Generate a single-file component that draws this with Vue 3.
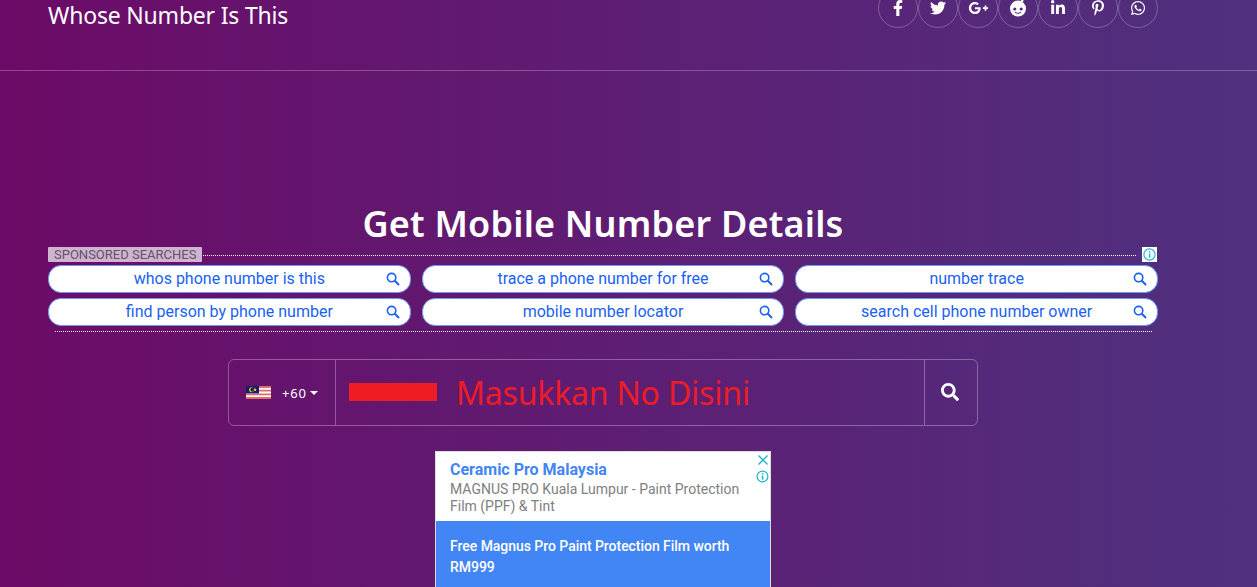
<template>
  <div class="page">
    <header class="topbar">
      <div class="topbar-inner">
        <a class="brand">Whose Number Is This</a>
        <div class="socials">
          <a v-for="s in socials" :key="s.name" class="social">
            <svg v-if="s.name !== 'reddit'" :viewBox="s.box" :width="s.w" height="16" fill="#fff"><path :d="s.d" /></svg>
            <svg v-else viewBox="0 0 18 18" width="18" height="18">
              <circle cx="9" cy="9.6" r="8" fill="#fff" />
              <circle cx="13.2" cy="1.8" r="1.3" fill="#fff" />
              <circle cx="5.8" cy="10" r="1.6" fill="#552a7c" />
              <circle cx="12.2" cy="10" r="1.6" fill="#552a7c" />
              <path d="M5.8 13.4 Q9 15.4 12.2 13.4" fill="none" stroke="#552a7c" stroke-width="1" />
            </svg>
          </a>
        </div>
      </div>
    </header>

    <main class="content">
      <h1 class="title">Get Mobile Number Details</h1>

      <section class="ads">
        <div class="ads-head">
          <span class="ads-label">SPONSORED SEARCHES</span>
          <span class="ads-rule"></span>
          <span class="ads-info">
            <svg viewBox="0 0 15 15" width="15" height="15">
              <circle cx="7.5" cy="7.5" r="5.6" fill="none" stroke="#2cb5d4" stroke-width="1.2" />
              <rect x="6.8" y="6.4" width="1.5" height="4.4" fill="#2cb5d4" />
              <rect x="6.8" y="4" width="1.5" height="1.5" fill="#2cb5d4" />
            </svg>
          </span>
        </div>
        <div class="pills">
          <a v-for="p in pills" :key="p" class="pill">
            <span class="pill-text">{{ p }}</span>
            <svg class="pill-icon" viewBox="0 0 14 14" width="14" height="14" fill="none" stroke="#1a62f0">
              <circle cx="5.6" cy="5.6" r="4.2" stroke-width="1.6" />
              <path d="M8.8 8.8 L13 13" stroke-width="2" />
            </svg>
          </a>
        </div>
        <div class="ads-foot"></div>
      </section>

      <div class="search">
        <div class="dial">
          <svg viewBox="0 0 25 13" width="25" height="13">
            <rect width="25" height="13" fill="#fff" />
            <path d="M0 0h25v1.9H0zM0 3.7h25v1.9H0zM0 7.4h25v1.9H0zM0 11.1h25V13H0z" fill="#e26a6a" />
            <rect width="13" height="7.4" fill="#14206e" />
            <circle cx="5.6" cy="3.7" r="2.5" fill="#f5c518" />
            <circle cx="6.5" cy="3.7" r="2.1" fill="#14206e" />
            <circle cx="9" cy="3.7" r="1.3" fill="#f5c518" />
          </svg>
          <span class="dial-code">+60</span>
          <span class="caret"></span>
        </div>
        <div class="field">
          <span class="redact"></span>
          <span class="hint">Masukkan No Disini</span>
        </div>
        <button class="go">
          <svg viewBox="0 0 512 512" width="18" height="18" fill="#fff"><path :d="searchPath" /></svg>
        </button>
      </div>

      <div class="ad-card">
        <div class="ad-top">
          <div class="ad-name">Ceramic Pro Malaysia</div>
          <div class="ad-desc">MAGNUS PRO Kuala Lumpur - Paint Protection Film (PPF) &amp; Tint</div>
          <div class="ad-marks">
            <svg viewBox="0 0 12 12" width="12" height="12" fill="none" stroke="#17b5d0" stroke-width="1.3">
              <path d="M1.5 1.5 L10.5 10.5 M10.5 1.5 L1.5 10.5" />
            </svg>
            <svg viewBox="0 0 13 13" width="13" height="13">
              <circle cx="6.5" cy="6.5" r="5.4" fill="none" stroke="#17b5d0" stroke-width="1.2" />
              <rect x="5.8" y="5.5" width="1.5" height="4.2" fill="#17b5d0" />
              <rect x="5.8" y="3" width="1.5" height="1.5" fill="#17b5d0" />
            </svg>
          </div>
        </div>
        <div class="ad-bottom">Free Magnus Pro Paint Protection Film worth RM999</div>
      </div>
    </main>
  </div>
</template>

<script setup>
const searchPath = 'M505 442.7L405.3 343c-4.5-4.5-10.6-7-17-7H372c27.6-35.3 44-79.7 44-128C416 93.1 322.9 0 208 0S0 93.1 0 208s93.1 208 208 208c48.3 0 92.7-16.4 128-44v16.3c0 6.4 2.5 12.5 7 17l99.7 99.7c9.4 9.4 24.6 9.4 33.9 0l28.3-28.3c9.4-9.4 9.4-24.6.1-34zM208 336c-70.7 0-128-57.2-128-128 0-70.7 57.2-128 128-128 70.7 0 128 57.2 128 128 0 70.7-57.2 128-128 128z'

const socials = [
  { name: 'facebook', box: '0 0 320 512', w: 10, d: 'M279.14 288l14.22-92.66h-88.91v-60.13c0-25.35 12.42-50.06 52.24-50.06h40.42V6.26S260.43 0 225.36 0c-73.22 0-121.08 44.38-121.08 124.72v70.62H22.89V288h81.39v224h100.17V288z' },
  { name: 'twitter', box: '0 0 512 512', w: 16, d: 'M459.37 151.716c.325 4.548.325 9.097.325 13.645 0 138.72-105.583 298.558-298.558 298.558-59.452 0-114.68-17.219-161.137-47.106 8.447.974 16.568 1.299 25.34 1.299 49.055 0 94.213-16.568 130.274-44.832-46.132-.975-84.792-31.188-98.112-72.772 6.498.974 12.995 1.624 19.818 1.624 9.421 0 18.843-1.3 27.614-3.573-48.081-9.747-84.143-51.98-84.143-102.985v-1.299c13.969 7.797 30.214 12.67 47.431 13.319-28.264-18.843-46.781-51.005-46.781-87.391 0-19.492 5.197-37.36 14.294-52.954 51.655 63.675 129.3 105.258 216.365 109.807-1.624-7.797-2.599-15.918-2.599-24.04 0-57.828 46.782-104.934 104.934-104.934 30.213 0 57.502 12.67 76.67 33.137 23.715-4.548 46.456-13.32 66.599-25.34-7.798 24.366-24.366 44.833-46.132 57.827 21.117-2.273 41.584-8.122 60.426-16.243-14.292 20.791-32.161 39.308-52.628 54.253z' },
  { name: 'google', box: '0 0 640 512', w: 21, d: 'M386.061 228.496c1.834 9.692 3.143 19.384 3.143 31.956C389.204 370.205 315.599 448 204.8 448c-106.084 0-192-85.915-192-192s85.916-192 192-192c51.864 0 95.083 18.859 128.611 50.292l-52.126 50.03c-14.145-13.621-39.028-29.599-76.485-29.599-65.484 0-118.92 54.221-118.92 121.277 0 67.056 53.436 121.277 118.92 121.277 75.961 0 104.513-54.745 108.965-82.773H204.8v-66.009h181.261zm185.406 6.437V179.2h-56.001v55.733h-55.733v56.001h55.733v55.733h56.001v-55.733H627.2v-56.001h-55.733z' },
  { name: 'reddit' },
  { name: 'linkedin', box: '0 0 448 512', w: 14, d: 'M100.28 448H7.4V148.9h92.88zM53.79 108.1C24.09 108.1 0 83.5 0 53.8a53.79 53.79 0 0 1 107.58 0c0 29.7-24.1 54.3-53.79 54.3zM447.9 448h-92.68V302.4c0-34.7-.7-79.2-48.29-79.2-48.29 0-55.69 37.7-55.69 76.7V448h-92.78V148.9h89.08v40.8h1.3c12.4-23.5 42.69-48.3 87.88-48.3 94 0 111.28 61.9 111.28 142.3V448z' },
  { name: 'pinterest', box: '0 0 384 512', w: 12, d: 'M204 6.5C101.4 6.5 0 74.9 0 185.6 0 256 39.6 296 63.6 296c9.9 0 15.6-27.6 15.6-35.4 0-9.3-23.7-29.1-23.7-67.8 0-80.4 61.2-137.4 140.4-137.4 68.1 0 118.5 38.7 118.5 109.8 0 53.1-21.3 152.7-90.3 152.7-24.9 0-46.2-18-46.2-43.8 0-37.8 26.4-74.4 26.4-113.4 0-66.2-93.9-54.2-93.9 25.8 0 16.8 2.1 35.4 9.6 50.7-13.8 59.4-42 147.9-42 209.1 0 18.9 2.7 37.5 4.5 56.4 3.4 3.8 1.7 3.4 6.9 1.5 50.4-69 48.6-82.5 71.4-172.8 12.3 23.4 44.1 36 69.3 36 106.2 0 153.9-103.5 153.9-196.8C384 71.3 298.2 6.5 204 6.5z' },
  { name: 'whatsapp', box: '0 0 448 512', w: 14, d: 'M380.9 97.1C339 55.1 283.2 32 223.9 32c-122.4 0-222 99.6-222 222 0 39.1 10.2 77.3 29.6 111L0 480l117.7-30.9c32.4 17.7 68.9 27 106.1 27h.1c122.3 0 224.1-99.6 224.1-222 0-59.3-25.2-115-67.1-157zm-157 341.6c-33.2 0-65.7-8.9-94-25.7l-6.7-4-69.8 18.3L72 359.2l-4.4-7c-18.5-29.4-28.2-63.3-28.2-98.2 0-101.7 82.8-184.5 184.6-184.5 49.3 0 95.6 19.2 130.4 54.1 34.8 34.9 56.2 81.2 56.1 130.5 0 101.8-84.9 184.6-186.6 184.6zm101.2-138.2c-5.5-2.8-32.8-16.2-37.9-18-5.1-1.9-8.8-2.8-12.5 2.8-3.7 5.6-14.3 18-17.6 21.8-3.2 3.7-6.5 4.2-12 1.4-32.6-16.3-54-29.1-75.5-66-5.7-9.8 5.7-9.1 16.3-30.3 1.8-3.7.9-6.9-.5-9.7-1.4-2.8-12.5-30.1-17.1-41.2-4.5-10.8-9.1-9.3-12.5-9.5-3.2-.2-6.9-.2-10.6-.2-3.7 0-9.7 1.4-14.8 6.9-5.1 5.6-19.4 19-19.4 46.3 0 27.3 19.9 53.7 22.6 57.4 2.8 3.7 39.1 59.7 94.8 83.8 35.2 15.2 49 16.5 66.6 13.9 10.7-1.6 32.8-13.4 37.4-26.4 4.6-13 4.6-24.1 3.2-26.4-1.3-2.5-5-3.9-10.5-6.6z' }
]

const pills = [
  'whos phone number is this',
  'trace a phone number for free',
  'number trace',
  'find person by phone number',
  'mobile number locator',
  'search cell phone number owner'
]
</script>

<style>
html, body {
  margin: 0;
  overflow: hidden;
}
</style>

<style scoped>
.page {
  height: 587px;
  overflow: hidden;
  background: linear-gradient(90deg, #6c0b67 0%, #4f317f 100%);
  font-family: Roboto, "Liberation Sans", sans-serif;
}

.topbar {
  height: 70px;
  border-bottom: 1px solid rgba(255, 255, 255, 0.25);
}

.topbar-inner {
  width: 1110px;
  margin-left: 48px;
  display: flex;
  justify-content: space-between;
  align-items: flex-start;
}

.brand {
  font-family: "Noto Sans", sans-serif;
  font-size: 23px;
  line-height: 30px;
  color: #fff;
  letter-spacing: -0.2px;
}

.socials {
  display: flex;
  margin-top: -12px;
}

.social {
  width: 40px;
  height: 40px;
  box-sizing: border-box;
  border: 1px solid rgba(255, 255, 255, 0.25);
  border-radius: 50%;
  display: flex;
  align-items: center;
  justify-content: center;
}

.content {
  width: 1110px;
  margin-left: 48px;
}

.title {
  margin: 0;
  padding-top: 129px;
  height: 46px;
  font-family: "Noto Sans", sans-serif;
  font-size: 36px;
  line-height: 47px;
  font-weight: 600;
  color: #fff;
  text-align: center;
  letter-spacing: 0.2px;
}

.ads-head {
  display: flex;
  align-items: center;
  height: 16px;
}

.ads-label {
  margin-top: 1px;
  background: #cfb3d1;
  color: #5f5565;
  font-size: 13px;
  line-height: 15px;
  padding: 0 6px;
  border-radius: 1px;
  white-space: nowrap;
}

.ads-rule {
  flex: 1;
  margin: 2px 6px 0 1px;
  border-top: 1px dotted #fff;
}

.ads-info {
  width: 15px;
  height: 15px;
  margin-right: 1px;
  background: #fff;
  display: block;
}

.ads-info svg {
  display: block;
}

.pills {
  margin-top: 3px;
  display: grid;
  grid-template-columns: repeat(3, 1fr);
  gap: 5px 11px;
}

.pill {
  height: 28px;
  box-sizing: border-box;
  background: #fff;
  border: 1px solid #6f98f5;
  border-radius: 13px;
  display: flex;
  align-items: center;
  padding: 0 10px 0 24px;
  color: #1a62f0;
  font-size: 16px;
}

.pill-text {
  flex: 1;
  padding-bottom: 2px;
  text-align: center;
  white-space: nowrap;
}

.pill-icon {
  flex: none;
}

.ads-foot {
  margin: 5px 6px 0 7px;
  border-top: 1px dotted #fff;
}

.search {
  width: 750px;
  height: 67px;
  box-sizing: border-box;
  margin: 27px 0 0 180px;
  border: 1px solid rgba(255, 255, 255, 0.3);
  border-radius: 6px;
  display: flex;
}

.dial {
  width: 107px;
  flex: none;
  box-sizing: border-box;
  padding-left: 17px;
  display: flex;
  align-items: center;
  border-right: 1px solid rgba(255, 255, 255, 0.3);
}

.dial-code {
  margin-left: 11px;
  font-family: "Noto Sans", sans-serif;
  font-size: 13px;
  letter-spacing: 0.8px;
  color: #fff;
}

.caret {
  margin-left: 3px;
  border-left: 4px solid transparent;
  border-right: 4px solid transparent;
  border-top: 4px solid #fff;
}

.field {
  flex: 1;
  display: flex;
  align-items: center;
  padding-left: 13px;
}

.redact {
  width: 88px;
  height: 18px;
  margin-bottom: 2px;
  background: #ee1c25;
}

.hint {
  margin-left: 19px;
  font-family: "Noto Sans", sans-serif;
  font-size: 32px;
  color: #ee1c25;
  letter-spacing: -0.2px;
  white-space: nowrap;
}

.go {
  width: 53px;
  flex: none;
  padding: 0 2px 2px 0;
  background: none;
  border: 0;
  border-left: 1px solid rgba(255, 255, 255, 0.3);
  display: flex;
  align-items: center;
  justify-content: center;
}

.ad-card {
  width: 336px;
  box-sizing: border-box;
  margin: 25px 0 0 387px;
  border: 1px solid #dcdcdc;
  border-bottom: 0;
  background: #fff;
}

.ad-top {
  position: relative;
  height: 69px;
  box-sizing: border-box;
  padding: 8px 30px 0 14px;
}

.ad-name {
  color: #4285f4;
  font-size: 16px;
  line-height: 19px;
  font-weight: 700;
}

.ad-desc {
  color: #808080;
  font-size: 14px;
  line-height: 17px;
  margin-top: 2px;
}

.ad-marks {
  position: absolute;
  top: 2px;
  right: 1px;
  display: flex;
  flex-direction: column;
  align-items: center;
  gap: 4px;
}

.ad-marks svg {
  display: block;
}

.ad-bottom {
  background: #4285f4;
  color: #fff;
  font-size: 14px;
  font-weight: 500;
  line-height: 21px;
  letter-spacing: -0.04px;
  padding: 15px 30px 20px 14px;
}
</style>
